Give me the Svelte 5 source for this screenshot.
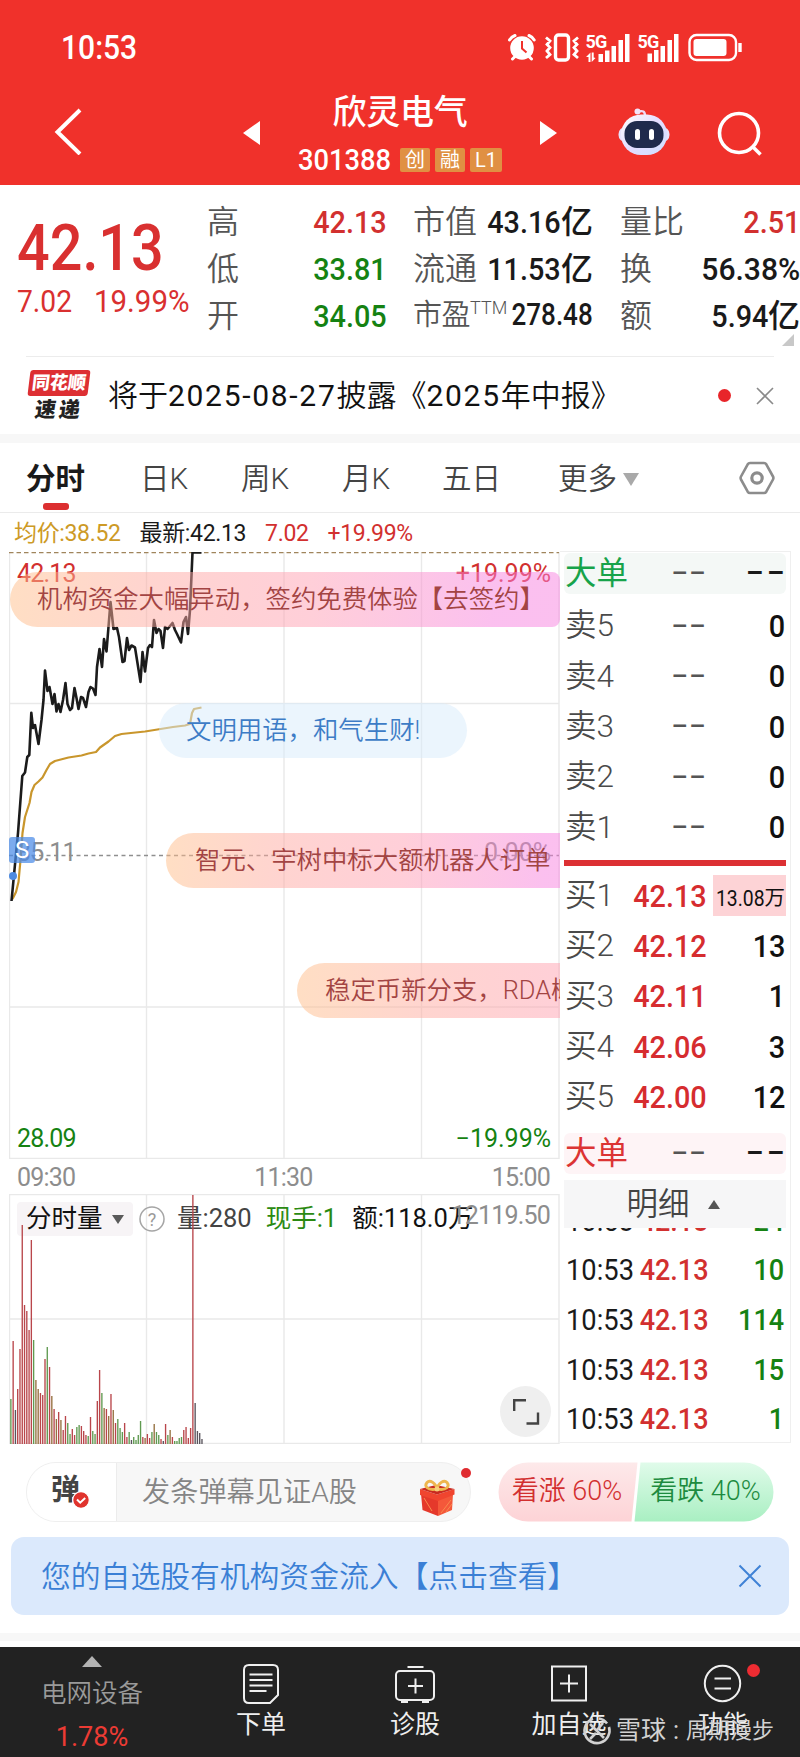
<script lang="ts">
	const tags = ['创', '融', 'L1'];

	const quoteA = [
		{ label: '高', value: '42.13', tone: 'up' },
		{ label: '低', value: '33.81', tone: 'down' },
		{ label: '开', value: '34.05', tone: 'down' }
	];
	const quoteB = [
		{ label: '市值', value: '43.16', unit: '亿' },
		{ label: '流通', value: '11.53', unit: '亿' },
		{ label: '市盈', sup: 'TTM', value: '278.48', unit: '' }
	];
	const quoteC = [
		{ label: '量比', value: '2.51', unit: '', tone: 'up' },
		{ label: '换', value: '56.38%', unit: '', tone: 'pct' },
		{ label: '额', value: '5.94', unit: '亿', tone: '' }
	];

	const sells = ['卖5', '卖4', '卖3', '卖2', '卖1'];
	const buys = [
		{ label: '买1', price: '42.13', vol: '13.08', unit: '万' },
		{ label: '买2', price: '42.12', vol: '13', unit: '' },
		{ label: '买3', price: '42.11', vol: '1', unit: '' },
		{ label: '买4', price: '42.06', vol: '3', unit: '' },
		{ label: '买5', price: '42.00', vol: '12', unit: '' }
	];
	const ticks = ['24', '10', '114', '15', '1'];

	const priceLine =
		'11.5,901 18,833 22.3,776 25,772.5 27.3,757 29.3,755 31.3,712.7 33,728 35,725 38.5,744 41.5,720 43.5,700 45,670.5 47.5,691 49.5,687 52.5,704 54.5,694 56.5,711.5 58.5,704 60.5,712 63,700 65.5,683 67.5,704 70,710 72,708 74.5,688 76.5,698 78.5,709 81,697 83,698 86,707 88.5,692 90.5,687 93,688.5 95.5,695 97,667 99.5,649 102,667 104,639 106.5,651.5 110.5,602 113.5,629 117,628 119,637 122.5,662 124.5,661 127,638 129,650 131.5,645.5 135,647.5 137,660 140.5,682 142.5,652 145,671.5 148,648 150,645 152,647 154,620 156.5,633 158.5,629 160.5,631 163,648 165,627 167.5,629 172.5,623 175,630 177,634 181,642.5 183.5,622 186,617 188,634 190,610 192.5,552.5 201.5,552.5';
	const avgLine =
		'12.5,899 16,892 18.5,882 20.5,860 22.5,833 25,817 29.5,803 31.5,792 34.5,785 38.5,781.5 42.5,777.5 46.5,770 50,764 55,761 68.5,757.5 81.5,755.5 88.5,753.5 96,752 100,747.5 108.5,741.5 115,736 121.5,734 145,731.5 173,727 185,725.5 190,724 192,713 194,709 201.5,707.5';

	// one bar per minute: height + direction (r up, g down, b mixed, k flat)
	const volumes =
		'45g 103r 34k 55r 95r 219r 139r 133r 114r 204r 104g 64b 55b 51r 49r 85r 97g 77r 48b 35r 25b 32r 24b 14r 28r 21g 10g 15r 9r 17g 19g 18r 13r 9r 8g 27r 13g 10g 43r 74r 51g 36b 35r 28b 50r 34b 21r 25g 16g 12g 21r 7r 12g 4k 7g 4g 9g 23g 7r 6b 10r 6r 12g 20b 12g 9g 5r 3k 20r 9g 14b 7r 3g 3g 6g 7g 14r 17r 6r 16r 249r 41k 13k 11k 5k'
			.split(' ')
			.map((v, i) => ({ x: 1.2 + i * 2.275, h: parseInt(v), dir: v.slice(-1) }));
</script>

<div class="page">
	<header class="header">
		<div class="status">
			<span class="clock">10:53</span>
			<svg class="status-icons" width="232" height="32" viewBox="0 0 232 32" fill="none">
				<!-- alarm -->
				<g stroke="#fff" stroke-width="3" stroke-linecap="round">
					<path d="M2.500 9A11 11 0 0 1 8 4.500M22 4.500a11 11 0 0 1 5.200 4.500M5.500 28l3-3M24.500 28l-3-3" />
				</g>
				<circle cx="15" cy="17" r="11.800" fill="#fff" />
				<path d="M15 10v7.500l4.500 4" stroke="#f0312b" stroke-width="2" />
				<!-- vibrate -->
				<rect x="48.500" y="4" width="13" height="25" rx="3" stroke="#fff" stroke-width="3.400" />
				<path d="M39 6.500l4 3.500-3 3.500 3 3-3 3.500 3 3.500-4 3.500M71 6.500l-4 3.500 3 3.500-3 3 3 3.500-3 3.500 4 3.500" stroke="#fff" stroke-width="2.800" />
				<!-- signal bars -->
				<g fill="#fff">
					<rect x="91.500" y="23" width="4.500" height="8" />
					<rect x="98" y="19.500" width="4.500" height="11.500" />
					<rect x="104.500" y="15" width="4.500" height="16" />
					<rect x="111.500" y="9" width="4.500" height="22" />
					<rect x="118" y="3" width="4.500" height="28" />
					<path d="M79 26l4.500-4.500v9.500h-2v-5zM88.500 27l-3.800 4v-9.500h2v5z" />
					<rect x="140.500" y="22.500" width="4.500" height="8.500" />
					<rect x="147" y="19" width="4.500" height="12" />
					<rect x="153.500" y="15" width="4.500" height="16" />
					<rect x="160.500" y="9" width="4.500" height="22" />
					<rect x="167" y="3" width="4.500" height="28" />
				</g>
				<text x="78.500" y="16.500" class="sig">5G</text>
				<text x="130.500" y="16.500" class="sig">5G</text>
				<!-- battery -->
				<rect x="182.500" y="4" width="46.500" height="25" rx="7" stroke="#fff" stroke-width="2.400" />
				<rect x="186.500" y="8" width="33" height="17" rx="3" fill="#fff" />
				<path d="M233 12v9" stroke="#fff" stroke-width="3.400" />
			</svg>
		</div>
		<div class="titlebar">
			<svg class="back" width="30" height="48" viewBox="0 0 30 48" fill="none" stroke="#fff" stroke-width="4">
				<path d="M26 3L3.500 25l22.500 22" />
			</svg>
			<span class="tri tri-left"></span>
			<div class="stock">
				<h1>欣灵电气</h1>
				<div class="code-row">
					<span class="code">301388</span>
					{#each tags as tag}
						<span class="tag">{tag}</span>
					{/each}
				</div>
			</div>
			<span class="tri tri-right"></span>
			<svg class="robot" width="54" height="50" viewBox="0 0 54 50">
				<defs>
					<linearGradient id="shell" x1="0" y1="0" x2="1" y2="1">
						<stop offset="0" stop-color="#ffffff" />
						<stop offset="0.5" stop-color="#e3dcff" />
						<stop offset="1" stop-color="#cfe0ff" />
					</linearGradient>
				</defs>
				<path d="M28 9c0-5-2-5.500-7-4.500" fill="none" stroke="#efd9f5" stroke-width="2.400" />
				<circle cx="20.500" cy="4.500" r="3" fill="#f3e4fa" />
				<rect x="1.500" y="20" width="51" height="15" rx="7" fill="#e6e2fb" />
				<rect x="4" y="7.500" width="46" height="40.500" rx="20" fill="url(#shell)" />
				<rect x="7.500" y="14" width="39" height="27" rx="12.500" fill="#1f2a4c" />
				<rect x="18" y="22" width="5" height="11" rx="2.500" fill="#fff" />
				<rect x="32" y="22" width="5" height="11" rx="2.500" fill="#fff" />
			</svg>
			<svg class="search" width="46" height="46" viewBox="0 0 46 46" fill="none" stroke="#fff" stroke-width="3.600">
				<circle cx="22" cy="22" r="19.500" />
				<path d="M35.500 35.500l8 8" />
			</svg>
		</div>
	</header>

	<section class="quote">
		<div class="last">
			<div class="last-price">42.13</div>
			<div class="last-change"><span>7.02</span><span>19.99%</span></div>
		</div>
		<div class="col col-a">
			{#each quoteA as q}
				<div class="cell"><span class="label">{q.label}</span><span class="val {q.tone}"><b>{q.value}</b></span></div>
			{/each}
		</div>
		<div class="col col-b">
			{#each quoteB as q}
				<div class="cell">
					<span class="label" class:small={q.sup}>{q.label}{#if q.sup}<sup>{q.sup}</sup>{/if}</span>
					<span class="val" class:tight={q.sup}><b>{q.value}</b><i>{q.unit}</i></span>
				</div>
			{/each}
		</div>
		<div class="col col-c">
			{#each quoteC as q}
				<div class="cell"><span class="label">{q.label}</span><span class="val {q.tone}"><b>{q.value}</b><i>{q.unit}</i></span></div>
			{/each}
		</div>
		<span class="corner"></span>
	</section>

	<section class="news">
		<div class="news-logo">
			<span class="logo-top">同花顺</span>
			<span class="logo-bottom">速递</span>
		</div>
		<p>将于<b>2025-08-27</b>披露《<b>2025</b>年中报》</p>
		<span class="dot"></span>
		<svg width="18" height="18" viewBox="0 0 18 18" stroke="#8a8a8a" stroke-width="1.600"><path d="M1 1l16 16M17 1L1 17" /></svg>
	</section>
	<div class="band"></div>

	<nav class="tabs">
		<span class="tab active">分时</span>
		<span class="tab">日K</span>
		<span class="tab">周K</span>
		<span class="tab">月K</span>
		<span class="tab">五日</span>
		<span class="tab more">更多<i></i></span>
		<svg width="36" height="34" viewBox="0 0 36 34" fill="none" stroke="#8c8c8c" stroke-width="2.600">
			<path d="M11 2h14q1.500 0 2.300 1.300L34 15.500q.8 1.500 0 3L27.300 30.700Q26.500 32 25 32H11q-1.500 0-2.300-1.300L2 18.500q-.8-1.500 0-3L8.700 3.300Q9.500 2 11 2z" />
			<circle cx="18" cy="17" r="5.200" stroke-width="3.200" />
		</svg>
	</nav>

	<main class="board">
		<div class="left">
			<div class="legend">
				<span class="avg">均价:38.52</span>
				<span>最新:42.13</span>
				<span class="up">7.02</span>
				<span class="up">+19.99%</span>
			</div>

			<div class="chart">
				<svg width="551" height="607" viewBox="9 552 551 607" fill="none">
					<path d="M9.500 552v607M146.500 552v607M284 552v607M421.500 552v607M559 552v607M9 703.500h550M9 1007h550M9 1158.500h550" stroke="#e9e9e9" stroke-width="1.400" />
					<path d="M9 552.500h550" stroke="#a0855c" stroke-width="1.400" stroke-dasharray="4.500 3" />
					<path d="M9 855.500h550" stroke="#8f8f8f" stroke-width="1.300" stroke-dasharray="4 3.500" />
					<polyline points={avgLine} stroke="#c9962c" stroke-width="2.200" stroke-linejoin="round" />
					<polyline points={priceLine} stroke="#1b1b1b" stroke-width="2.600" stroke-linejoin="round" />
					<circle cx="13" cy="876" r="4" fill="#4c8ae0" />
				</svg>
				<span class="mark tl up">42.13</span>
				<span class="mark tr up">+19.99%</span>
				<span class="mark ml">35.11</span>
				<span class="mark mr">0.00%</span>
				<span class="mark bl down">28.09</span>
				<span class="mark br down">−19.99%</span>
				<span class="flag">S</span>
				<div class="bullet b1">机构资金大幅异动，签约免费体验【去签约】</div>
				<div class="bullet b2">文明用语，和气生财!</div>
				<div class="bullet b3">智元、宇树中标大额机器人订单</div>
				<div class="bullet b4">稳定币新分支，RDA概</div>
			</div>

			<div class="times"><span>09:30</span><span>11:30</span><span>15:00</span></div>

			<div class="volume">
				<svg width="551" height="250" viewBox="0 0 551 250" fill="none">
					<path d="M.5 0v250M137.500 0v250M275 0v250M412.500 0v250M550 0v250M0 .5h550M0 125h550M0 249.500h550" stroke="#e9e9e9" stroke-width="1.400" />
				</svg>
				<div class="vol-head">
					<span class="picker">分时量<i></i></span>
					<svg width="26" height="26" viewBox="0 0 26 26" fill="none">
						<circle cx="13" cy="13" r="12" stroke="#a5a5a5" stroke-width="1.500" />
						<text x="13" y="19.500" text-anchor="middle" class="q">?</text>
					</svg>
					<span class="v1">量:280</span>
					<span class="v2">现手:1</span>
					<span class="v3">额:118.0万</span>
				</div>
				<span class="vol-max">12119.50</span>
				<svg width="551" height="250" viewBox="0 0 551 250">
					{#each volumes as v}
						<rect class="bar-{v.dir}" x={v.x} y={250 - v.h} width="1.350" height={v.h} />
					{/each}
				</svg>
				<span class="expand">
					<svg width="28" height="28" viewBox="0 0 28 28" fill="none" stroke="#444" stroke-width="2.400">
						<path d="M2.200 13V2.200H14M26 14.500V25.500H14.500" />
					</svg>
				</span>
			</div>
		</div>

		<aside class="book">
			<div class="row total sell-total"><span class="name">大单</span><span class="dash">--</span><span class="dash dark">--</span></div>
			<div class="sells">
				{#each sells as s}
					<div class="row"><span class="name">{s}</span><span class="dash">--</span><span class="qty">0</span></div>
				{/each}
			</div>
			<div class="split"></div>
			<div class="buys">
				{#each buys as b}
					<div class="row">
						<span class="name">{b.label}</span>
						<span class="price">{b.price}</span>
						{#if b.unit}
							<span class="qty-big"><b>{b.vol}</b>{b.unit}</span>
						{:else}
							<span class="qty">{b.vol}</span>
						{/if}
					</div>
				{/each}
			</div>
			<div class="row total buy-total"><span class="name">大单</span><span class="dash">--</span><span class="dash dark">--</span></div>
			<div class="detail">明细<i></i></div>
			<div class="ticks">
				{#each ticks as t}
					<div class="tick"><span class="t">10:53</span><span class="p up">42.13</span><span class="n down">{t}</span></div>
				{/each}
			</div>
		</aside>
	</main>

	<section class="social">
		<div class="input">
			<div class="toggle">
				<span>弹</span>
				<svg width="18" height="18" viewBox="0 0 18 18" fill="none">
					<circle cx="9" cy="9" r="8.300" fill="#e0332d" stroke="#fff" stroke-width="1.200" />
					<path d="M5 8.500l3.200 3.200L13.200 7" stroke="#fff" stroke-width="2" />
				</svg>
			</div>
			<span class="placeholder">发条弹幕见证A股</span>
			<svg class="gift" width="36" height="40" viewBox="0 0 36 40">
				<path d="M2 17l17 5v17L3.500 33z" fill="#e5392b" />
				<path d="M34 17l-15 5v17l14-6z" fill="#f4583a" />
				<path d="M1 12l17 5.500L35.500 12v5.500L19 24 1 18z" fill="#f0452f" />
				<path d="M1 12l16-4 18.500 4L18 17.500z" fill="#c92a20" />
				<path d="M22 36l10-13M27 35l6-8M5 21l8 13" stroke="#f98a4e" stroke-width="1" />
				<path d="M18 12C8 14 5 9 8 5.500s9 1 10 6.500c1-5.500 7-10 10-6.500s0 8.500-10 6.500z" fill="none" stroke="#eeb64e" stroke-width="2.800" />
				<circle cx="18" cy="12" r="2.500" fill="#f6cf7a" />
			</svg>
			<span class="dot"></span>
		</div>
		<div class="vote">
			<svg width="277" height="60" viewBox="0 0 277 60">
				<defs>
					<linearGradient id="bull" x1="0" y1="0" x2="0" y2="1">
						<stop offset="0" stop-color="#fde9ea" />
						<stop offset="1" stop-color="#fdd3d6" />
					</linearGradient>
					<linearGradient id="bear" x1="0" y1="0" x2="0" y2="1">
						<stop offset="0" stop-color="#e0fbea" />
						<stop offset="1" stop-color="#a9efc2" />
					</linearGradient>
				</defs>
				<path d="M30 .5H139.500L133.500 59.500H30a29.500 29.500 0 0 1 0-59z" fill="url(#bull)" />
				<path d="M142.500 .5H246a29.500 29.500 0 0 1 0 59H136.500z" fill="url(#bear)" />
			</svg>
			<span class="bull">看涨 60%</span>
			<span class="bear">看跌 40%</span>
		</div>
	</section>

	<section class="banner">
		<span>您的自选股有机构资金流入【点击查看】</span>
		<svg width="24" height="24" viewBox="0 0 24 24" stroke="#3f82d6" stroke-width="2"><path d="M1.500 1.500l21 21M22.500 1.500l-21 21" /></svg>
	</section>
	<div class="band band-low"></div>

	<footer class="footer">
		<div class="sector">
			<i></i>
			<span>电网设备</span>
			<b>1.78%</b>
		</div>
		<div class="action">
			<svg width="38" height="42" viewBox="0 0 38 42" fill="none" stroke="#efefef" stroke-width="2">
				<path d="M7 2h24q5 0 5 5v25l-8 8H7q-5 0-5-5V7q0-5 5-5zM7.500 11.500h23M7.500 17h23M7.500 22.500h23M7.500 28h17" />
			</svg>
			<span>下单</span>
		</div>
		<div class="action">
			<svg width="42" height="42" viewBox="0 0 42 42" fill="none" stroke="#efefef" stroke-width="2">
				<path d="M13.500 4h16" />
				<rect x="2" y="8" width="38" height="29" rx="4" />
				<path d="M14 23h15M21.500 15.500v15" />
				<path d="M7 38.500h7M28 38.500h7" stroke-width="3" />
			</svg>
			<span>诊股</span>
		</div>
		<div class="action">
			<svg width="38" height="42" viewBox="0 0 38 42" fill="none" stroke="#efefef" stroke-width="2">
				<path d="M2 3.500h34v34H2zM10 20.500h18M19 11.500v18" />
			</svg>
			<span>加自选</span>
		</div>
		<div class="action">
			<svg width="42" height="42" viewBox="0 0 42 42" fill="none" stroke="#efefef" stroke-width="2">
				<circle cx="20.500" cy="20.500" r="17.700" />
				<path d="M12.500 15.500h16.500M12.500 25.500h16.500" />
			</svg>
			<span>功能</span>
			<em></em>
		</div>
		<div class="watermark">
			<svg width="30" height="30" viewBox="0 0 30 30" fill="none" stroke="#d2d2d2" stroke-width="2.600">
				<path d="M11 2.800A12.500 12.500 0 1 0 27 11M17 2.500a12.500 12.500 0 0 1 8 5" />
				<path d="M8 8l14 14M21 7l-6 7M14 17l-6 6" />
			</svg>
			<span>雪球</span><span class="colon">:</span><span>周期漫步</span>
		</div>
	</footer>
</div>

<style>
	:global(body) { background: #fff; }
	.page {
		width: 800px;
		height: 1757px;
		overflow: hidden;
		background: #fff;
		color: #1a1a1a;
		font-family: Roboto, "Noto Sans CJK SC", sans-serif;
		font-weight: 400;
		line-height: 1.25;
		white-space: nowrap;
	}
	i, em { font-style: normal; }
	.up { color: #d2302f; }
	.down { color: #158212; }

	/* the app's digits are a narrow DIN cut, so Roboto figures are squeezed a little */
	.clock, .code, .last-price, .last-change span, .t { transform: scaleX(0.91); transform-origin: left; }
	.val b, .price, .qty, .qty-big b, .p, .n { display: inline-block; transform: scaleX(0.9); transform-origin: right; font-weight: inherit; }

	.header { height: 185px; background: #f0312b; color: #fff; }
	.status {
		display: flex;
		justify-content: space-between;
		align-items: center;
		height: 95px;
		box-sizing: border-box;
		padding: 0 60px 0 61px;
	}
	.clock { font-size: 33px; font-weight: 500; }
	.status-icons { overflow: visible; margin: -1px 1px 0 0; }
	.sig { font-size: 18px; font-weight: 700; fill: #fff; letter-spacing: -0.8px; }
	.titlebar { display: flex; height: 90px; }
	.back { margin: 12px 0 0 54px; flex: none; }
	.tri {
		margin-top: 26px;
		width: 0;
		height: 0;
		border-top: 12.5px solid transparent;
		border-bottom: 12.5px solid transparent;
	}
	.tri-left { margin-left: 159px; border-right: 17px solid #fff; }
	.tri-right { margin-left: 38px; border-left: 17px solid #fff; }
	.stock { width: 204px; margin-left: 38px; }
	h1 {
		margin: 0;
		font-size: 34px;
		font-weight: 500;
		line-height: 34px;
		letter-spacing: -0.3px;
		text-align: center;
	}
	.code-row { display: flex; align-items: center; gap: 5px; height: 24px; margin-top: 19px; }
	.code { width: 97px; font-size: 30px; font-weight: 500; }
	.tag {
		flex: 1 0 auto;
		background: #e09043;
		border-radius: 2px;
		font-size: 20px;
		line-height: 24px;
		text-align: center;
	}
	.robot { margin: 12px 0 0 60px; }
	.search { margin: 16px 0 0 46px; }

	.quote { position: relative; display: flex; height: 171px; }
	.last { width: 207px; padding: 31px 0 0 17px; box-sizing: border-box; color: #d93030; }
	.last-price { font-size: 65px; font-weight: 500; line-height: 64px; transform: scaleX(0.885); }
	.last-change { display: flex; gap: 17px; margin-top: 2px; font-size: 31px; font-weight: 450; line-height: 40px; }
	.last-change span:last-child { transform: scaleX(0.95); }
	.col { padding-top: 13px; }
	.col-a { width: 180px; }
	.col-b { width: 180px; margin-left: 26px; }
	.col-c { width: 180px; margin-left: 27px; }
	.cell { display: flex; justify-content: space-between; align-items: center; height: 47px; }
	.label { color: #555; font-size: 32px; font-weight: 350; }
	.label.small { font-size: 29px; letter-spacing: -0.5px; }
	.label sup { font-size: 18px; font-weight: 300; line-height: 0; letter-spacing: 0; vertical-align: 11px; }
	.val { font-size: 32px; font-weight: 500; }
	.val.tight { margin-left: -30px; font-size: 31px; }
	.val.tight b { transform: scaleX(0.84); }
	.val.pct b { transform: scaleX(0.94); }
	.corner {
		position: absolute;
		right: 6px;
		top: 149px;
		border-left: 12px solid transparent;
		border-bottom: 12px solid #c8c8c8;
	}

	.news {
		display: flex;
		align-items: center;
		height: 77px;
		margin: 0 26px;
		border-top: 1px solid #ececec;
	}
	.news-logo { width: 65px; display: flex; flex-direction: column; align-items: center; }
	.logo-top {
		width: 60px;
		background: #dd2f33;
		border-radius: 3px;
		color: #fff;
		font-size: 18px;
		font-weight: 900;
		line-height: 26px;
		text-align: center;
		transform: skewX(-7deg);
	}
	.logo-bottom {
		margin-top: 3px;
		color: #222;
		font-size: 21px;
		font-weight: 900;
		line-height: 22px;
		letter-spacing: 3px;
		transform: skewX(-8deg);
	}
	.news p { flex: 1; margin: 0 0 0 17px; font-size: 30px; font-weight: 350; color: #111; }
	.news b { font-weight: 400; letter-spacing: 1.7px; }
	.news .dot { width: 13px; height: 13px; margin-right: 25px; border-radius: 50%; background: #e8252a; }
	.band { height: 9px; background: #f7f7f7; }

	.tabs { display: flex; align-items: center; height: 69px; border-bottom: 1px solid #ebebeb; padding: 0 25px 0 26px; }
	.tab { position: relative; width: 101px; padding-top: 3px; font-size: 29.500px; font-weight: 350; color: #444; }
	.tab.active { width: 114px; color: #1a1a1a; font-weight: 700; }
	.tab:nth-child(4) { width: 100px; }
	.tab:nth-child(5) { width: 116px; }
	.tab.active::after {
		content: '';
		position: absolute;
		left: 17px;
		bottom: -13px;
		width: 26px;
		height: 7px;
		border-radius: 3px;
		background: #dc2f30;
	}
	.more { display: flex; align-items: center; gap: 6px; flex: 1; }
	.more i { border: 8px solid transparent; border-top: 13px solid #a9a9a9; border-bottom: 0; }

	.board { display: flex; height: 931px; }
	.left { width: 550px; padding-left: 9px; flex: none; }
	.legend { display: flex; align-items: center; gap: 19px; height: 39px; padding: 3px 0 0 5px; box-sizing: border-box; font-size: 23px; letter-spacing: -0.35px; }
	.avg { color: #cd9a26; }
	.chart { position: relative; width: 551px; height: 607px; overflow: hidden; }
	.chart svg { display: block; }
	.mark { position: absolute; font-size: 25px; line-height: 28px; letter-spacing: -0.8px; color: #8d8d8d; }
	.mark.up { color: #d2302f; }
	.mark.down { color: #158212; }
	.tl { left: 8px; top: 8px; }
	.tr { right: 9px; top: 8px; letter-spacing: 0; }
	.ml { left: 8px; top: 287px; }
	.mr { right: 9px; top: 287px; letter-spacing: 0; }
	.bl { left: 8px; top: 573px; }
	.br { right: 9px; top: 573px; letter-spacing: 0; }
	.flag {
		position: absolute;
		left: 0;
		top: 285px;
		width: 26px;
		height: 26px;
		border-radius: 3px;
		background: rgba(74, 138, 232, 0.72);
		color: #fff;
		font-size: 24px;
		line-height: 26px;
		text-align: center;
	}
	.bullet {
		position: absolute;
		box-sizing: border-box;
		height: 55px;
		border-radius: 28px;
		color: #a34443;
		font-size: 25.400px;
		font-weight: 350;
		line-height: 54px;
		background: linear-gradient(90deg, rgba(255, 190, 137, 0.5) 0, rgba(255, 170, 160, 0.5) 25%, rgba(255, 159, 179, 0.5) 55%, rgba(247, 129, 223, 0.5) 88%);
	}
	.b1 { left: 1px; right: 0; top: 20px; padding-left: 27px; border-radius: 28px 8px 8px 28px; }
	.b2 { left: 150px; top: 151px; width: 308px; padding-left: 27px; color: #3d7cc6; background: rgba(215, 235, 251, 0.5); }
	.b3 { left: 157px; top: 281px; width: 430px; padding-left: 29px; }
	.b4 { left: 288px; top: 411px; width: 520px; padding-left: 28px; }
	.times { display: flex; justify-content: space-between; align-items: center; height: 35px; padding: 2px 9px 0 8px; box-sizing: border-box; color: #8d8d8d; font-size: 25px; letter-spacing: -0.8px; }

	.volume { position: relative; height: 250px; width: 551px; }
	.volume > svg { position: absolute; left: 0; top: 0; }
	.vol-head { position: relative; display: flex; align-items: center; height: 50px; padding-left: 8px; font-size: 25.500px; }
	.picker { display: flex; align-items: center; gap: 9px; width: 116px; height: 34px; padding-left: 9px; margin-right: 6px; box-sizing: border-box; background: #f7f4f6; border-radius: 4px; color: #111; }
	.picker i { border: 6.5px solid transparent; border-top: 9px solid #5a5a5a; border-bottom: 0; }
	.q { font-size: 18px; fill: #9a9a9a; }
	.v1 { margin-left: 12px; color: #444; }
	.v2 { margin-left: 14px; color: #2b8a12; }
	.v3 { margin-left: 15px; color: #111; }
	.vol-max { position: absolute; right: 10px; top: 8px; font-size: 25px; line-height: 28px; letter-spacing: -0.8px; color: #8d8d8d; }
	.bar-r { fill: #b9464b; }
	.bar-g { fill: #5f9a50; }
	.bar-b { fill: #95703f; }
	.bar-k { fill: #59545c; }
	.expand { position: absolute; right: 9px; bottom: 7px; display: flex; align-items: center; justify-content: center; width: 51px; height: 51px; border-radius: 50%; background: #efefef; }

	.book { width: 231px; height: 892px; margin-top: 38px; margin-left: 1px; padding: 1px 4px 0; box-sizing: border-box; border: 1px solid #efefef; border-left: 0; }
	.row { display: grid; grid-template-columns: 66px 76px 1fr; align-items: center; height: 50.300px; padding: 0 1px; }
	.name { color: #4a4a4a; font-size: 31.500px; font-weight: 350; }
	.dash { justify-self: end; margin: -5px -1px 0 0; font-size: 34px; font-weight: 400; line-height: 36px; letter-spacing: 2px; color: #555; transform: scaleX(1.55); transform-origin: right; }
	.dash.dark { margin-right: -3px; color: #1a1a1a; font-weight: 500; }
	.total { height: 41px; border-radius: 6px; }
	.sell-total { background: #f4f8f6; }
	.sell-total .name { color: #17a34a; font-weight: 400; }
	.buy-total { margin-top: 11px; background: #fef4f6; }
	.buy-total .name { color: #dc3434; font-weight: 400; }
	.sells { padding-top: 7px; }
	.split { height: 6px; margin: 8px 0 4px; background: #dc3033; }
	.price, .qty { justify-self: end; font-size: 32px; font-weight: 500; }
	.price { color: #d62c2f; }
	.qty { color: #111; }
	.qty-big { display: flex; justify-content: flex-end; margin: 0 -1px 0 6px; height: 41px; box-sizing: border-box; padding: 4px 1px 0 0; line-height: 38px; background: #fdd3d6; color: #111; font-size: 20.500px; }
	.qty-big b { margin-left: -8px; font-size: 22.500px; transform: scaleX(0.86); }
	.detail { display: flex; align-items: center; justify-content: center; gap: 18px; height: 48px; margin-top: 6px; padding: 2px 4px 0 0; box-sizing: border-box; background: #f6f6f7; color: #444; font-size: 31.500px; font-weight: 350; }
	.detail i { border: 6px solid transparent; border-bottom: 9px solid #555; border-top: 0; }
	.ticks { display: flex; flex-direction: column; justify-content: flex-end; height: 216px; overflow: hidden; }
	.tick { flex: none; display: grid; grid-template-columns: 66px 77px 1fr; align-items: center; height: 49.700px; padding: 0 2px; font-size: 30px; }
	.p { justify-self: end; font-weight: 500; }
	.n { justify-self: end; font-weight: 500; }

	.social { display: flex; align-items: center; height: 60px; margin: 18px 26px 0; }
	.input { position: relative; display: flex; align-items: center; width: 446px; height: 60px; box-sizing: border-box; border: 1px solid #efefef; border-radius: 30px; background: #f7f7f7; }
	.toggle { position: relative; width: 90px; height: 58px; box-sizing: border-box; border-right: 1px solid #ececec; border-radius: 30px 0 0 30px; background: #fff; padding-left: 24px; }
	.toggle span { color: #444; font-size: 29px; font-weight: 700; line-height: 55px; }
	.toggle svg { position: absolute; left: 45px; top: 28px; }
	.placeholder { flex: 1; padding: 2px 0 0 25px; color: #858585; font-size: 28.200px; font-weight: 350; }
	.gift { margin: 9px 15px 0 0; }
	.input .dot { position: absolute; right: -1px; top: 5px; width: 10px; height: 10px; border-radius: 50%; background: #e02c30; }
	.vote { position: relative; display: flex; align-items: center; width: 277px; height: 60px; margin-left: 27px; font-size: 27px; }
	.vote svg { position: absolute; }
	.vote span { position: relative; font-weight: 350; }
	.bull { padding-left: 14px; color: #d22f2f; }
	.bear { padding-left: 28px; color: #1d8b3f; }

	.banner { display: flex; align-items: center; justify-content: space-between; height: 78px; margin: 15px 11px 18px; padding: 0 27px 0 30px; border-radius: 13px; background: #dbe9fc; color: #3a7fd5; font-size: 29.800px; font-weight: 350; }
	.banner span { padding-top: 2px; }
	.band-low { height: 8px; margin-bottom: 6px; }

	.footer { position: relative; display: grid; grid-template-columns: 184px repeat(4, 154px); height: 110px; background: #222; color: #efefef; }
	.sector { display: flex; flex-direction: column; align-items: center; padding-top: 9px; color: #9a9a9a; font-size: 25.500px; font-weight: 350; }
	.sector i { border: 10px solid transparent; border-bottom: 11px solid #b3b3b3; border-top: 0; }
	.sector span { line-height: 34px; margin-top: 9px; }
	.sector b { color: #ec3b34; font-size: 27px; font-weight: 400; line-height: 34px; margin-top: 10px; }
	.action { position: relative; display: flex; flex-direction: column; align-items: center; padding-top: 16px; font-size: 25px; }
	.action span { line-height: 34px; margin-top: 3px; }
	.action em { position: absolute; left: 101px; top: 17px; width: 13px; height: 13px; border-radius: 50%; background: #ee2c32; }
	.watermark { position: absolute; left: 582px; top: 68px; display: flex; align-items: center; color: #d2d2d2; font-size: 25px; line-height: 32px; }
	.watermark svg { margin-right: 4px; }
	.watermark .colon { width: 20px; text-align: center; }
	.watermark span:last-child { font-size: 22px; }
</style>
